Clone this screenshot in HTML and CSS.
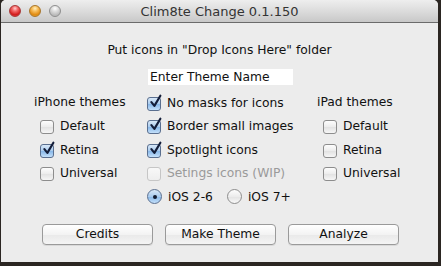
FILE: index.html
```html
<!DOCTYPE html>
<html>
<head>
<meta charset="utf-8">
<link rel="stylesheet" href="styles.css">
</head>
<body>
<div class="window">
  <div class="titlebar">
    <div class="lights">
      <span class="light red"></span>
      <span class="light yellow"></span>
      <span class="light gray"></span>
    </div>
    <div class="title">Clim8te Change 0.1.150</div>
  </div>
  <div class="content">
    <p class="instr">Put icons in "Drop Icons Here" folder</p>
    <div class="name-row"><span class="name-field">Enter Theme Name</span></div>
    <div class="grid">
      <div class="col col-left">
        <div class="head">iPhone themes</div>
        <label class="opt"><span class="cb"></span>Default</label>
        <label class="opt"><span class="cb on"><svg viewBox="0 0 16 16"><path d="M3.6 7.6 L6.8 11.6 L13.2 0.8"/></svg></span>Retina</label>
        <label class="opt"><span class="cb"></span>Universal</label>
      </div>
      <div class="col col-mid">
        <label class="opt"><span class="cb on"><svg viewBox="0 0 16 16"><path d="M3.6 7.6 L6.8 11.6 L13.2 0.8"/></svg></span>No masks for icons</label>
        <label class="opt"><span class="cb on"><svg viewBox="0 0 16 16"><path d="M3.6 7.6 L6.8 11.6 L13.2 0.8"/></svg></span>Border small images</label>
        <label class="opt"><span class="cb on"><svg viewBox="0 0 16 16"><path d="M3.6 7.6 L6.8 11.6 L13.2 0.8"/></svg></span>Spotlight icons</label>
        <label class="opt disabled"><span class="cb"></span>Setings icons (WIP)</label>
        <div class="radios">
          <label class="opt"><span class="rb on"></span>iOS 2-6</label>
          <label class="opt"><span class="rb"></span>iOS 7+</label>
        </div>
      </div>
      <div class="col col-right">
        <div class="head">iPad themes</div>
        <label class="opt"><span class="cb"></span>Default</label>
        <label class="opt"><span class="cb"></span>Retina</label>
        <label class="opt"><span class="cb"></span>Universal</label>
      </div>
    </div>
    <div class="buttons">
      <button class="btn">Credits</button>
      <button class="btn">Make Theme</button>
      <button class="btn">Analyze</button>
    </div>
  </div>
</div>
</body>
</html>
```
FILE: styles.css
```css
html, body {
  margin: 0;
  padding: 0;
}
body {
  width: 441px;
  height: 266px;
  background: #2b2622;
  font-family: "DejaVu Sans", "Liberation Sans", sans-serif;
  font-size: 12.3px;
  color: #111;
  overflow: hidden;
}
.window {
  margin-left: 1px;
  width: 437px;
  height: 262px;
  background: #ececec;
  border-radius: 5px 5px 0 0;
  overflow: hidden;
}
.titlebar {
  height: 22px;
  border-bottom: 1px solid #6b6b6b;
  background: linear-gradient(#eeeeee, #d8d8d8 60%, #c8c8c8);
  display: flex;
  align-items: center;
  justify-content: center;
  position: relative;
}
.lights {
  position: absolute;
  left: 8px;
  top: 5px;
  display: flex;
  gap: 8px;
}
.light {
  width: 12px;
  height: 12px;
  border-radius: 50%;
  box-sizing: border-box;
}
.red {
  background: radial-gradient(circle at 50% 25%, #ffd0d0 0, #f46a6a 30%, #d21a1a 70%, #e85a5a 100%);
  border: 1px solid #a83838;
}
.yellow {
  background: radial-gradient(circle at 50% 25%, #fff0c0 0, #f8c060 30%, #e08a10 70%, #f0b040 100%);
  border: 1px solid #a8762a;
}
.gray {
  background: radial-gradient(circle at 50% 25%, #ffffff 0, #dcdcdc 35%, #b8b8b8 75%, #d0d0d0 100%);
  border: 1px solid #8e8e8e;
}
.title {
  font-size: 13px;
  color: #333;
  padding-top: 1px;
}
.content {
  display: flex;
  flex-direction: column;
  align-items: center;
}
.instr {
  margin: 19px 0 0;
  line-height: 16px;
  height: 16px;
}
.name-row {
  margin-top: 11px;
  width: 100%;
  display: flex;
}
.name-field {
  margin-left: 147px;
  width: 145px;
  height: 16px;
  line-height: 16px;
  background: #fff;
  padding-left: 2px;
  box-sizing: border-box;
}
.grid {
  margin-top: 6px;
  width: 100%;
  display: grid;
  grid-template-columns: 33px 113px 170px auto;
}
.col {
  display: flex;
  flex-direction: column;
}
.col-left { grid-column: 2; }
.col-mid { grid-column: 3; }
.col-right { grid-column: 4; }
.head {
  height: 23.5px;
  line-height: 23.5px;
}
.col-left .opt, .col-right .opt {
  margin-left: 6px;
}
.opt {
  height: 23.5px;
  display: flex;
  align-items: center;
  gap: 6px;
}
.cb {
  width: 14px;
  height: 14px;
  box-sizing: border-box;
  border: 1px solid #8d8d8d;
  border-radius: 3px;
  background: linear-gradient(#fdfdfd, #ececec 50%, #e2e2e2 51%, #f6f6f6);
  position: relative;
  flex: none;
  margin-top: 2px;
}
.cb.on {
  border-color: #5a6f8f;
  background: linear-gradient(#d8e8f8, #a9cbee 50%, #86b6e8 51%, #c4e0fa);
}
.cb svg {
  position: absolute;
  left: 0px;
  top: -3px;
  width: 15px;
  height: 15px;
  overflow: visible;
}
.cb svg path {
  fill: none;
  stroke: #141e3a;
  stroke-width: 2.3;
  stroke-linecap: round;
  stroke-linejoin: round;
}
.disabled {
  color: #9a9a9a;
}
.disabled .cb {
  border-color: #c6c6c6;
  background: linear-gradient(#f8f8f8, #eeeeee);
}
.radios {
  display: flex;
  gap: 14px;
}
.rb {
  width: 15px;
  height: 15px;
  box-sizing: border-box;
  border-radius: 50%;
  border: 1px solid #8d8d8d;
  background: linear-gradient(#fdfdfd, #ececec 50%, #e2e2e2 51%, #f8f8f8);
  position: relative;
  flex: none;
}
.rb.on {
  border-color: #5a6f8f;
  background: linear-gradient(#d8e8f8, #a9cbee 50%, #86b6e8 51%, #c4e0fa);
}
.rb.on::after {
  content: "";
  position: absolute;
  left: 4.5px;
  top: 4.5px;
  width: 4px;
  height: 4px;
  border-radius: 50%;
  background: #111a30;
}
.buttons {
  margin-top: 15px;
  width: 100%;
  display: flex;
  gap: 12px;
  padding-left: 41px;
  box-sizing: border-box;
}
.btn {
  width: 111px;
  height: 21px;
  font-family: inherit;
  font-size: 12.3px;
  color: #111;
  border: 1px solid #9a9a9a;
  border-radius: 4px;
  background: linear-gradient(#ffffff, #f3f3f3 50%, #e9e9e9 51%, #f4f4f4);
  padding: 0;
  box-shadow: 0 1px 0 rgba(0,0,0,0.08);
}
```
